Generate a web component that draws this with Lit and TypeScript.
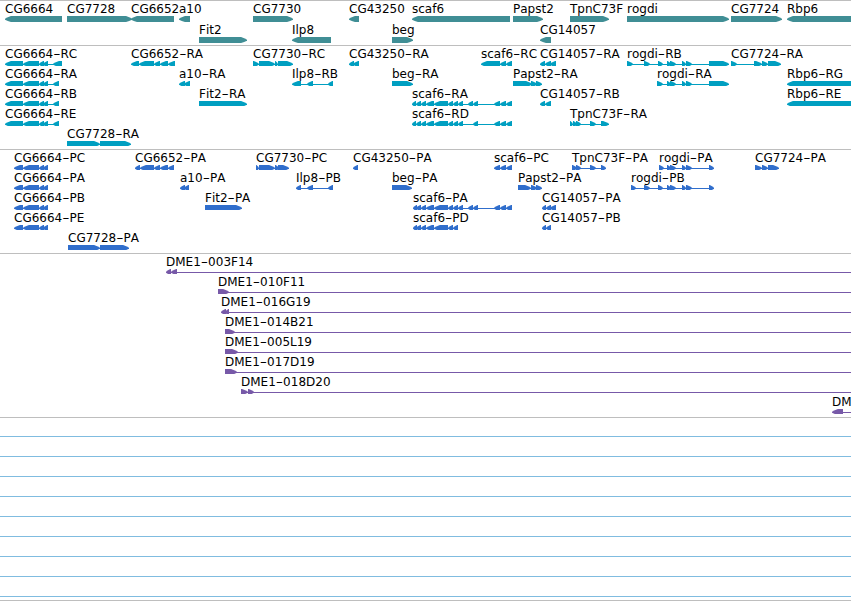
import { LitElement, css, html, svg } from "lit";
import { customElement, property } from "lit/decorators.js";

type Block = [number, number];

interface Feature {
  name: string;
  strand: "+" | "-";
  blocks: Block[];
  // features that run past the right edge of the view
  open?: boolean;
}

const VIEW_WIDTH = 851;
const HEAD = 7;

const fwd = (name: string, ...blocks: Block[]): Feature => ({ name, strand: "+", blocks });
const rev = (name: string, ...blocks: Block[]): Feature => ({ name, strand: "-", blocks });
const open = (feature: Feature): Feature => ({ ...feature, open: true });

const CG6664_CORE: Block[] = [[23, 39], [39, 44], [43, 48]];
const ROGDI_CORE: Block[] = [[667, 671], [670, 676], [682, 686], [686, 692]];
const SCAF6_CORE: Block[] = [[416, 421], [421, 426], [426, 434], [434, 448], [448, 453], [453, 458]];
const SCAF6_TAIL: Block[] = [[494, 500], [500, 506], [506, 512]];

const GENES: Feature[][] = [
  [
    rev("CG6664", [5, 62]),
    fwd("CG7728", [67, 132]),
    rev("CG6652", [131, 174]),
    rev("a10", [179, 190]),
    fwd("CG7730", [253, 293]),
    rev("CG43250", [349, 359]),
    rev("scaf6", [412, 510]),
    fwd("Papst2", [513, 543]),
    fwd("TpnC73F", [570, 609]),
    fwd("rogdi", [627, 729]),
    fwd("CG7724", [731, 782]),
    rev("Rbp6", [787, 860]),
  ],
  [
    fwd("Fit2", [199, 247]),
    rev("Ilp8", [292, 331]),
    fwd("beg", [392, 413]),
    rev("CG14057", [540, 551]),
  ],
];

const TRANSCRIPTS: Feature[][] = [
  [
    rev("CG6664-RC", [5, 23], ...CG6664_CORE, [53, 62]),
    rev("CG6652-RA", [131, 139], [139, 154], [154, 160], [160, 168], [168, 175]),
    fwd("CG7730-RC", [253, 259], [259, 275], [275, 278], [278, 293]),
    rev("CG43250-RA", [349, 354], [353, 359]),
    rev("scaf6-RC", [481, 500], [500, 506], [506, 512]),
    rev("CG14057-RA", [540, 545], [545, 551], [550, 556]),
    fwd("rogdi-RB", [627, 633], [644, 650], [658, 663], ...ROGDI_CORE, [709, 729]),
    fwd("CG7724-RA", [731, 737], [754, 762], [762, 768], [768, 781]),
  ],
  [
    rev("CG6664-RA", [5, 23], ...CG6664_CORE, [53, 59]),
    rev("a10-RA", [179, 185], [184, 190]),
    rev("Ilp8-RB", [292, 301], [307, 313], [328, 333]),
    fwd("beg-RA", [392, 413]),
    fwd("Papst2-RA", [513, 532], [531, 537], [536, 542]),
    fwd("rogdi-RA", [657, 663], ...ROGDI_CORE, [709, 729]),
    rev("Rbp6-RG", [787, 860]),
  ],
  [
    rev("CG6664-RB", [5, 23], ...CG6664_CORE, [53, 59]),
    fwd("Fit2-RA", [199, 247]),
    rev("scaf6-RA", [412, 416], ...SCAF6_CORE, [458, 463], [468, 473], [473, 478], ...SCAF6_TAIL),
    rev("CG14057-RB", [540, 545], [545, 551]),
    rev("Rbp6-RE", [787, 860]),
  ],
  [
    rev("CG6664-RE", [5, 23], ...CG6664_CORE, [53, 59]),
    rev("scaf6-RD", [412, 416], ...SCAF6_CORE, [458, 463], [473, 478], ...SCAF6_TAIL),
    fwd("TpnC73F-RA", [570, 573], [573, 577], [576, 581], [590, 596], [601, 609]),
  ],
  [fwd("CG7728-RA", [67, 100], [100, 131])],
];

const PROTEINS: Feature[][] = [
  [
    rev("CG6664-PC", [14, 23], ...CG6664_CORE),
    rev("CG6652-PA", [135, 140], [140, 154], [154, 160], [160, 168], [168, 174]),
    fwd("CG7730-PC", [256, 259], [259, 275], [275, 279], [278, 289]),
    rev("CG43250-PA", [353, 358]),
    rev("scaf6-PC", ...SCAF6_TAIL),
    fwd("TpnC73F-PA", [572, 577], [576, 581], [590, 596], [601, 606]),
    fwd("rogdi-PA", [659, 664], ...ROGDI_CORE, [709, 714]),
    fwd("CG7724-PA", [755, 762], [762, 768], [768, 779]),
  ],
  [
    rev("CG6664-PA", [14, 23], ...CG6664_CORE),
    rev("a10-PA", [180, 185], [184, 189]),
    rev("Ilp8-PB", [296, 301], [307, 313], [328, 333]),
    fwd("beg-PA", [392, 412]),
    fwd("Papst2-PA", [518, 531], [531, 537], [536, 542]),
    fwd("rogdi-PB", [631, 636], [644, 650], [658, 663], ...ROGDI_CORE, [709, 714]),
  ],
  [
    rev("CG6664-PB", [14, 23], ...CG6664_CORE),
    fwd("Fit2-PA", [205, 242]),
    rev("scaf6-PA", [413, 417], ...SCAF6_CORE, [458, 463], [468, 473], [473, 478], ...SCAF6_TAIL),
    rev("CG14057-PA", [542, 546], [546, 551], [550, 556]),
  ],
  [
    rev("CG6664-PE", [14, 23], ...CG6664_CORE),
    rev("scaf6-PD", [413, 417], ...SCAF6_CORE),
    rev("CG14057-PB", [542, 546], [546, 551]),
  ],
  [fwd("CG7728-PA", [68, 100], [100, 129])],
];

const CLONES: Feature[][] = [
  [open(rev("DME1-003F14", [166, 171], [171, 177]))],
  [open(fwd("DME1-010F11", [218, 229]))],
  [open(rev("DME1-016G19", [221, 226], [225, 229]))],
  [open(fwd("DME1-014B21", [225, 235]))],
  [open(fwd("DME1-005L19", [225, 238]))],
  [open(fwd("DME1-017D19", [225, 237]))],
  [open(fwd("DME1-018D20", [241, 248], [248, 254]))],
  [open(rev("DM", [832, 843]))],
];

@customElement("feature-track")
export class FeatureTrack extends LitElement {
  @property({ attribute: false }) rows: Feature[][] = [];
  @property({ type: Number }) rowHeight = 20;

  static styles = css`
    :host {
      display: flex;
      flex-direction: column;
      border-bottom: 1px solid #bebebe;
      color: var(--track-color);
    }

    .row {
      display: block;
      flex: none;
    }

    .shape {
      fill: currentColor;
    }

    .label {
      font: 12px "DejaVu Sans", sans-serif;
      font-kerning: none;
      fill: #000;
    }
  `;

  _renderBlock([start, end]: Block, strand: string) {
    const head = Math.min(HEAD, end - start);
    const tip = strand === "+" ? end : start;
    const back = strand === "+" ? start : end;
    const dir = strand === "+" ? -1 : 1;
    const shoulder = tip + dir * head * 0.85;
    const cheek = tip + dir * head * 0.4;

    return svg`<polygon
      class="shape"
      points="${back},15 ${shoulder},15 ${cheek},16.3 ${tip},17.8 ${tip},18.8 ${cheek},20 ${shoulder},21 ${back},21"
    />`;
  }

  _renderLabel(name: string, x: number) {
    const [head, tail] = name.split("-");

    // the dash is stretched to the width of a digit
    return svg`<text class="label" x=${x} y="12">${head}${
      tail ? svg`<tspan textLength="7.3" lengthAdjust="spacingAndGlyphs">-</tspan>${tail}` : null
    }</text>`;
  }

  _renderFeature(feature: Feature) {
    const start = feature.blocks[0][0];
    const end = feature.open ? VIEW_WIDTH : feature.blocks[feature.blocks.length - 1][1];

    return svg`
      <rect class="shape" x=${start + 1} y="18" width=${end - start - 1} height="1" />
      ${feature.blocks.map((block) => this._renderBlock(block, feature.strand))}
      ${this._renderLabel(feature.name, start)}
    `;
  }

  render() {
    return this.rows.map(
      (row) => html`
        <svg class="row" width=${VIEW_WIDTH} height=${this.rowHeight}>
          ${row.map((feature) => this._renderFeature(feature))}
        </svg>
      `,
    );
  }
}

@customElement("app-root")
export class AppRoot extends LitElement {
  static styles = css`
    :host {
      display: flex;
      flex-direction: column;
      box-sizing: border-box;
      width: 851px;
      height: 601px;
      overflow: hidden;
      background: #fff;
      border-top: 1px solid #bebebe;
    }

    feature-track {
      flex: none;
      padding-bottom: 3px;
    }

    .genes {
      --track-color: #408e95;
      padding-bottom: 2px;
    }

    .transcripts {
      --track-color: #009fc1;
    }

    .proteins {
      --track-color: #306ecc;
    }

    .clones {
      --track-color: #7759a8;
    }

    .lines {
      padding-bottom: 3px;
      border-bottom: 1px solid #bebebe;
    }

    .line {
      box-sizing: border-box;
      height: 20px;
      border-bottom: 1px solid #80bce0;
    }

    .line:first-child {
      height: 19px;
    }
  `;

  render() {
    return html`
      <feature-track class="genes" .rows=${GENES} .rowHeight=${21}></feature-track>
      <feature-track class="transcripts" .rows=${TRANSCRIPTS}></feature-track>
      <feature-track class="proteins" .rows=${PROTEINS}></feature-track>
      <feature-track class="clones" .rows=${CLONES}></feature-track>
      <div class="lines">${Array.from({ length: 9 }, () => html`<div class="line"></div>`)}</div>
    `;
  }
}
